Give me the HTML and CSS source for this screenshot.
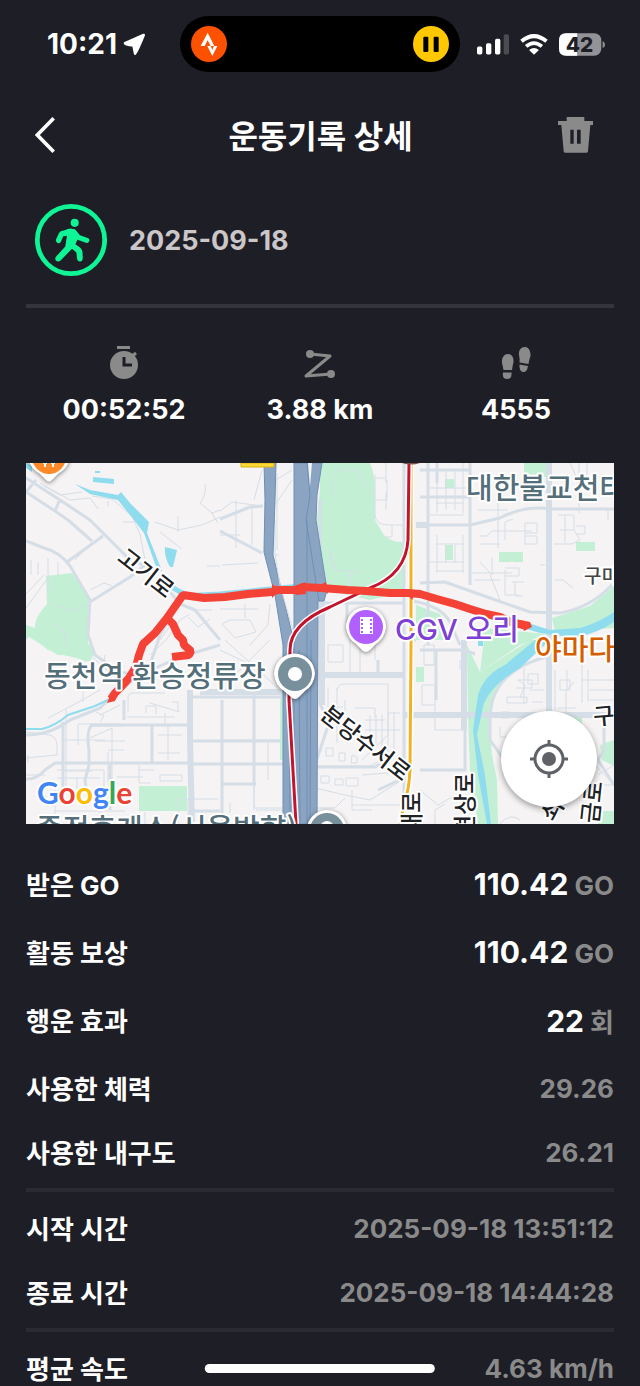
FILE: index.html
```html
<!DOCTYPE html>
<html lang="ko">
<head>
  <meta charset="UTF-8" />
  <meta name="viewport" content="width=device-width, initial-scale=1.0" />
  <title>운동기록 상세</title>
  <link rel="stylesheet" href="styles.css">
</head>
<body>
  <div class="screen">
    <div class="status-bar">
      <div class="status-left">
        <span class="clock">10:21</span>
        <svg class="arrow" viewBox="368 97 70 70"><path d="M431 103L374 128Q374 132 400 135L405 160Q408 160 431 103Z" fill="#fff" stroke="#fff" stroke-width="8" stroke-linejoin="round"/></svg>
      </div>
      <div class="island">
        <svg class="island-icon" viewBox="573 78 108 108">
          <circle cx="627" cy="132" r="54" fill="#fc5200"/>
          <path d="M602 138L623 98L643 138H632L623 121L614 138Z" fill="#fff"/>
          <path d="M622 138H632L637 149L642 138H652L637 168Z" fill="#fff"/>
        </svg>
        <svg class="island-icon" viewBox="0 0 108 108">
          <circle cx="54" cy="54" r="54" fill="#ffc800"/>
          <rect x="31" y="32" width="15" height="46" rx="3" fill="#000"/>
          <rect x="62" y="32" width="15" height="46" rx="3" fill="#000"/>
        </svg>
      </div>
      <div class="status-right">
        <svg class="signal" viewBox="472 98 96 62">
          <rect x="472" y="135" width="16" height="24" rx="5" fill="#fff"/>
          <rect x="499" y="125" width="16" height="34" rx="5" fill="#fff"/>
          <rect x="526" y="112" width="16" height="47" rx="5" fill="#fff"/>
          <rect x="552" y="98" width="16" height="61" rx="5" fill="#4b4b50"/>
        </svg>
        <svg class="wifi" viewBox="600 96 84 64">
          <path d="M604 118Q642 87 680 118" fill="none" stroke="#fff" stroke-width="12"/>
          <path d="M618 134Q642 113 666 134" fill="none" stroke="#fff" stroke-width="11"/>
          <path d="M627 145Q642 133 657 145L642 159Z" fill="#fff"/>
        </svg>
        <svg class="battery" viewBox="717 96 137 67">
          <rect x="717" y="96" width="126" height="67" rx="21" fill="#929297"/>
          <path d="M771 96H738Q717 96 717 117V142Q717 163 738 163H771Z" fill="#fff"/>
          <path d="M847 119Q854 123 854 130T847 140Z" fill="#929297"/>
          <text x="778" y="151" class="battery-text">42</text>
        </svg>
      </div>
    </div>

    <header class="header">
      <button class="icon-btn" aria-label="뒤로">
        <svg class="back" viewBox="0 0 60 108"><path d="M56 4L7 54L56 104" fill="none" stroke="#fff" stroke-width="11"/></svg>
      </button>
      <h1>운동기록 상세</h1>
      <button class="icon-btn delete-btn" aria-label="삭제">
        <svg class="trash" viewBox="0 0 105 108"><path fill="#8a8a8a" fill-rule="evenodd" d="M26 0H79V12H105V24H97L90 103Q90 107 86 107H21Q17 107 17 103L10 24H0V12H26ZM37 38V80H47V38ZM57 38V80H68V38Z"/></svg>
      </button>
    </header>

    <main class="content">
      <section class="summary">
        <svg class="walk" viewBox="0 0 214 214">
          <circle cx="107" cy="107" r="100" fill="none" stroke="#0ff596" stroke-width="14"/>
          <circle cx="118" cy="56" r="12" fill="#0ff596"/>
          <path d="M88 78Q108 68 119 78L131 96L120 120Q140 132 141 142L142 160Q142 171 134 171T125 162L123 144L110 133L76 168Q68 174 62 168Q58 162 63 156L90 126L95 94L84 96L77 112Q73 118 67 116Q61 113 62 106L71 87Q74 80 88 78Z" fill="#0ff596"/>
          <path d="M115 82L129 99L154 108" fill="none" stroke="#0ff596" stroke-width="15" stroke-linecap="round" stroke-linejoin="round"/>
        </svg>
        <time datetime="2025-09-18">2025-09-18</time>
      </section>

      <ul class="stats">
        <li>
          <svg class="stat-icon" viewBox="106 345 36 36">
            <circle cx="124" cy="365" r="14" fill="#8a8a8a"/>
            <path d="M117 346h13v3h-13z" fill="#8a8a8a"/>
            <path d="M131 357l5-4" stroke="#8a8a8a" stroke-width="3"/>
            <path d="M124 357v8h8" fill="none" stroke="#1e1e26" stroke-width="3"/>
          </svg>
          <strong>00:52:52</strong>
        </li>
        <li>
          <svg class="stat-icon" viewBox="302 345 36 36">
            <path d="M310 354L330 356L306 376L331 374" fill="none" stroke="#8a8a8a" stroke-width="3" stroke-linejoin="round"/>
            <circle cx="310" cy="354" r="4" fill="#8a8a8a"/>
            <circle cx="331" cy="374" r="4" fill="#8a8a8a"/>
          </svg>
          <strong>3.88 km</strong>
        </li>
        <li>
          <svg class="stat-icon" viewBox="498 345 36 36" fill="#8a8a8a">
            <path d="M508 354C512 354 514 358 513.5 362Q512.5 366 512 370H503.5Q503 367 502 363C501.5 358 504 354 508 354Z"/>
            <path d="M503 372.5h8.5Q512 379 507 379T503 372.5Z"/>
            <path d="M525 347C529 347 531 352 530.5 356Q529 360 528.5 364L519.5 362.5Q520 359 519 355C518.5 350 521 347 525 347Z"/>
            <path d="M519.5 364.5l8.5 1.5Q527 372.5 523 372Q519 371 519.5 364.5Z"/>
          </svg>
          <strong>4555</strong>
        </li>
      </ul>

      <div class="map">
        <svg class="map-canvas" viewBox="26 463 588 361" role="img" aria-label="운동 경로 지도">
          <rect x="26" y="463" width="588" height="361" fill="#f5f3f3"/>

          <!-- parks -->
          <g fill="#c3f0d5">
            <path d="M46 576L72 573L91 600L88 645L92 662L64 655L48 650L26 632V640L35 628Q34 618 47 604Z"/>
            <path d="M26 625L70 640L92 645L94 655L86 662Q76 654 58 655L26 635Z"/>
            <path d="M320 463H370Q375 474 375 490V520L384 535Q392 543 404 542V592L370 600L326 590L316 525L320 490Z"/>
            <path d="M524 463h22v14h-14l-8-4zM445 479h9v9h-9zM445 545h8v15h-8zM499 552h24v10h-24zM576 542h19v9h-19z"/>
            <path d="M614 586L590 606L552 618L555 632L614 628Z"/>
            <path d="M470 626L505 630L545 634L520 645L480 672L484 640Z"/>
            <path d="M467 645L480 672L530 640L550 640L520 665Q494 684 492 712H468Z"/>
            <path d="M468 718H489L492 755L497 780L498 824H478L470 770Z"/>
            <path d="M416 605L440 614L452 640H416ZM416 667h8v15h-8z"/>
            <path d="M139 786h48v25h-48zM280 695h4v65h-4zM600 745L614 740V766L602 760ZM598 811h16v13h-16zM570 718h12v8h-12z"/>
          </g>

          <!-- streets -->
          <g class="street">
            <path d="M40 483L70 500L90 498L98 509M44 486L60 495L82 492M92 496L112 499L132 516L140 534L145 560M108 501v5M123 522h12M155 522L178 530L202 525L220 517M178 516v16M205 484Q207 494 200 503L212 513L220 510M212 513l6 10M220 566h-13M160 532L170 540L182 549"/>
            <path d="M31 560v15M38 562v13M48 558V598M58 562v14M26 594L44 575M26 608L50 575M90 590L104 583L112 586M52 602Q66 612 78 610L88 604M53 624L64 632L66 646"/>
            <path d="M195 610h17M150 655L166 640L180 620L190 614M160 640l10-14M188 617l10 10 12-8M75 560L84 550"/>
            <path d="M220 511L232 502L262 506M236 500v48M252 505v40M220 535h20M222 565L258 563M262 470L254 500M276 480L292 470M275 505L292 480M275 520v35h4"/>
            <path d="M220 609h38M245 604v14M222 624L230 620H250L256 632L235 638ZM270 604L268 625L250 645M220 650L262 670M230 680L270 640M225 640L280 690"/>
            <path d="M331 495Q330 472 342 470H355L365 483L372 494M328 548L336 570L360 572M333 570L330 552M375 475V515Q376 525 388 525H404M386 463v20M375 500h12V480M386 510v-18M392 525v12h-6M375 478h10"/>
            <path d="M430 488h36M437 463v50M463 463v50M446 470v40M455 470v40M436 503h28M430 515h34M437 535v38M463 535v38M446 545v18M455 545v18M436 544h28M430 562h34M436 571h28"/>
            <path d="M478 510h30M498 478v70M480 536h7l5-5h40M505 540v-18l8-3M525 545v-22h12v10h-12M525 536h12v8h-12M480 544h20M480 562L492 575V558M472 573h40M474 580h26M505 570v25h14M505 568h14v8h-14M490 575L500 600M512 582h12M515 582v14h8"/>
            <path d="M558 515h15M565 515v28M560 530h14M574 515v15l6 10-8 4H554M576 526h9v8h-9M579 463v50M555 580h8l10 8M540 565h5M570 463L580 485L587 480M608 510v10M587 463v16h10"/>
            <path d="M26 732L50 735Q57 738 57 745V755L26 758M28 755v8M64 740H105M66 710V790M78 745V724H120M95 741h30M93 726H125M90 738L112 728M112 728V790M108 750h16M64 771h28M108 752v30M77 777v12M57 770H104V790M57 778H100"/>
            <path d="M128 712V698Q128 693 134 693H165M127 717h48M150 703L180 712M146 713V706h10v8M172 702h6v10M165 713v12M158 735h24M168 725V760M158 753h22M160 775h22v6h-22ZM139 765v18h12M117 777h26M139 770h15M96 712L104 716L100 722"/>
            <path d="M90 655L116 678M105 655L102 675M83 685V702M48 718L75 704L100 690M120 705L100 715M190 740v40M26 775h20M55 788V824M100 800V824M178 799h40M178 799v25M188 799v25M55 811H125M145 812v12"/>
            <path d="M220 740h60M268 740v40M254 695V810M222 784h32v24h30M256 810h28M230 803v10"/>
            <path d="M328 645h15v17h-15ZM350 640v38M360 640v38M375 640v20M337 688v55M337 690Q338 684 344 684H388V735L362 760M345 700v15M365 720h20M328 687v20h15M365 730h35M370 715v30M376 715v30M382 715v40M388 712v50M394 712v40M388 713h12M355 708h20v10"/>
            <path d="M326 748h7v8h-7ZM339 753h6v8h-6ZM352 755l5 2v6h-6ZM321 776h8v7h-8ZM335 779h8v6h-8ZM346 778h12v8h-12ZM315 788L345 795L370 800L410 775M315 766H370L390 755M352 790v20h20M315 808h20l10-10M352 805h55M362 775L400 772"/>
            <path d="M424 645h10v20h-10ZM422 685h13v20h-13ZM424 665h12M460 660v10M435 705V730H465M501 712h8v6h-8ZM507 697h20v6h-20ZM518 680L525 685L520 698M518 680h14v8h-16M528 674h10v10h-10ZM524 668v36M530 690h14M532 702h11M555 670v40M567 670v20l7-8M560 680h10v10h-10ZM566 690v22M582 663v40M588 670v32M582 680h32M590 690h24M590 700h24M558 708h18"/>
            <path d="M420 790L438 805L452 797M435 824V810L445 804M500 824Q510 812 520 820M500 727v10h8M595 765L614 785M598 775L614 765M600 785h14"/>
          </g>
          <g class="road">
            <path d="M26 478L60 500L90 520L110 540L130 560L150 567M26 492L55 511L68 520L92 541M26 492l10-12M55 511l5-12M60 500L75 510M26 541L44 548Q60 552 70 566L90 600L88 635L95 655L120 672L140 675M67 562L103 536M90 602L130 577L145 565"/>
            <path d="M170 592L180 604L195 610L220 640M150 665L160 635L175 610M220 519L250 507L263 506M220 531L262 553M26 735Q50 735 70 720L100 708L120 690L140 675L180 657L220 645"/>
            <path d="M63 722V790M90 725H190M92 725Q86 730 89 750V765L85 780L88 800M26 779Q36 780 45 770L55 763H190M152 725V763M124 720V700M110 763V810M222 700V824M190 741H280M190 764H283M190 811H220M222 784h34M192 697H283M254 695V784M295 695v20"/>
            <path d="M404 463V824M324 603H404M320 675H404M320 500V705M320 705L330 720L315 765M347 603v20M378 660v15M428 463V645M420 525H470L500 518Q525 505 550 509H614M470 463V585M420 470h50M420 497h50M420 583L445 582L490 598L530 612L560 613Q590 608 612 585M437 463v20"/>
            <path d="M420 650H464L475 654M436 650V700M420 770H465V750M404 716H614M465 645V765M490 716Q492 670 550 656M490 716V740L510 768M604 716V750L598 760L614 785"/>
            <path d="M412 601Q440 605 450 622L460 645M404 640h12M404 715h15M378 790L410 775M318 767H375L390 758"/>
          </g>
          <g class="road wide">
            <path d="M549 463V640M549 650V730M190 690V740L192 824M464 640V730M404 715H614M200 692H283M320 675H404M322 600V705M416 525h12"/>
          </g>

          <!-- water -->
          <g fill="#8fdcef">
            <path d="M60 478L90 490L118 495L121 492L130 503L149 522L147 533L162 571L158 572L144 533L134 520L118 500L90 494L75 484ZM93 477l21 2v5l-21-2zM95 471h5v2h-5zM165 547l12 3-4 17h-3q-6-10-5-20zM26 462l6 4v6l-6-4z"/>
            <path d="M173 585L184 591L182 596L172 590Z"/>
            <path d="M418 590L500 614L550 630L580 628Q600 622 614 612V622Q600 632 575 638L540 633L495 620L418 595Z"/>
            <path d="M535 640L550 640L520 668Q484 690 482 712L477 735L485 775L491 824H487L478 775L473 730L478 695Q484 675 505 665ZM478 640h5v6h-5z"/>
          </g>
          <path d="M26 729H42Q55 726 68 715L95 706L110 699" fill="none" stroke="#8fdcef" stroke-width="2"/>
          <path d="M182 596L220 594L270 589L300 586" fill="none" stroke="#8fdcef" stroke-width="5"/>

          <!-- highways -->
          <g fill="#8ba4c1" stroke="#6d90b7">
            <path d="M264 463L265 500L264 552L275 595L283 645L283 824H300L296 650L285 605L273 555L275 500L276 463Z"/>
            <path d="M294 463H322L317 495L316 520L327 590L324 601H318L317 824H294Z"/>
            <path d="M307 463L310 495L306 520L319 601M307 520V824M299 650L300 824M311 640L310 824M289 660L290 824" fill="none"/>
            <path d="M308 463h4l-2 24z" fill="#f5f3f3" stroke="none"/>
          </g>
          <path d="M275 554L280 585L293 630M277 474V550" class="street"/>

          <!-- railways -->
          <path d="M411 463V645L410 770Q409 790 405 800L400 824" class="rail-casing"/>
          <path d="M411 463V645L410 770Q409 790 405 800L400 824" class="rail-yellow"/>
          <path d="M409 463L408 540Q406 574 370 588L330 607Q290 624 290 650L289 700L296 824" class="rail-casing"/>
          <path d="M409 463L408 540Q406 574 370 588L330 607Q290 624 290 650L289 700L296 824" class="rail-red"/>

          <path d="M350 586v-14M347 575h9" class="street"/>
          <path d="M241 463h33v4h-33z" fill="#fdd835" stroke="#d9b310"/>
          <path d="M402 463q9 3 18 0z" fill="#77534b"/>

          <!-- recorded route -->
          <path class="route" d="M111 699L115 693L121 687L129 678L136 667L139 655L143 644L155 633L167 618L183 595L204 598L225 597L248 594L272 592L277 590L295 590L303 587L321 588L348 590L366 591L390 593L408 593L420 594L437 599L455 604L470 609L486 614L500 617L511 622L527 626"/>
          <path class="route" d="M167 618L173 624L178 635L183 640L184 645L191 651L189 655L172 657"/>
          <path d="M107 703L112 691L119 690L115 701ZM272 584l8 6-8 8zM294 588l11-6 1 12-10 1zM318 586l8-4 2 12zM404 590l12 2-4 8zM520 620l10 2 2 5-8 4z" fill="#f44336"/>

          <!-- pins -->
          <g class="pin">
            <path d="M29 460A20 20 0 1 1 69 460Q68 468 58 474L52 480Q49 483 46 480L40 474Q30 468 29 460Z" fill="#fff"/>
            <circle cx="49" cy="457" r="17" fill="#ff8a27"/>
            <path d="M45 460v7M53 460v7M43 463h4M51 463h4" stroke="#fff" stroke-width="2"/>
          </g>
          <g class="pin">
            <path d="M346 627A20 20 0 1 1 386 627Q385 638 376 644L370 650Q366 654 362 650L356 644Q347 638 346 627Z" fill="#fff"/>
            <circle cx="366" cy="627" r="17" fill="#b15fff"/>
            <path fill="#fff" fill-rule="evenodd" d="M360 617h13v17h-13zM361 619v2h2v-2zM361 623v2h2v-2zM361 627v2h2v-2zM361 631v2h2v-2zM370 619v2h2v-2zM370 623v2h2v-2zM370 627v2h2v-2zM370 631v2h2v-2z"/>
          </g>
          <g class="pin">
            <path d="M274 674A20 20 0 1 1 315 674Q314 685 305 691L299 697Q295 701 291 697L284 691Q275 685 274 674Z" fill="#fff"/>
            <circle cx="295" cy="674" r="17" fill="#78909c"/>
            <circle cx="295" cy="674" r="7" fill="#fff"/>
          </g>
          <g class="pin">
            <circle cx="327" cy="830" r="20" fill="#fff"/>
            <circle cx="327" cy="830" r="17" fill="#78909c"/>
            <circle cx="327" cy="828" r="7" fill="#fff"/>
          </g>

          <!-- labels -->
          <g class="place">
            <text x="466" y="499">대한불교천태</text>
            <text x="44" y="687">동천역 환승정류장</text>
            <text x="36" y="840">죽전휴게소(서울방향)</text>
            <text x="395" y="640" class="cinema">CGV 오리</text>
            <text x="535" y="660" class="food">야마다</text>
            <text x="584" y="583" class="town">구미</text>
          </g>
          <g class="street-name">
            <text transform="translate(116 560) rotate(38)">고기로</text>
            <text transform="translate(319 717) rotate(38)">분당수서로</text>
            <text transform="translate(420 834) rotate(-90)">대로</text>
            <text transform="translate(473 836) rotate(-90)">현상로</text>
            <text transform="translate(594 725) rotate(-5)">구</text>
            <text transform="translate(554 823) rotate(-60)">쇠</text>
            <text transform="translate(598 824) rotate(-84)">금로</text>
          </g>
          <text x="37" y="804" class="google"><tspan fill="#4285f4">G</tspan><tspan fill="#ea4335">o</tspan><tspan fill="#fbbc04">o</tspan><tspan fill="#4285f4">g</tspan><tspan fill="#34a853">l</tspan><tspan fill="#ea4335">e</tspan></text>
        </svg>
        <button class="locate" aria-label="내 위치">
          <svg class="locate-icon" viewBox="0 0 114 114">
            <circle cx="57" cy="57" r="42" fill="none" stroke="#5f6368" stroke-width="9"/>
            <circle cx="57" cy="57" r="21" fill="#5f6368"/>
            <path d="M57 0v18M57 96v18M0 57h18M96 57h18" stroke="#5f6368" stroke-width="9"/>
          </svg>
        </button>
      </div>

      <dl class="details rewards">
        <div class="row"><dt>받은 GO</dt><dd><b>110.42</b> GO</dd></div>
        <div class="row"><dt>활동 보상</dt><dd><b>110.42</b> GO</dd></div>
        <div class="row"><dt>행운 효과</dt><dd><b>22</b> 회</dd></div>
      </dl>
      <dl class="details">
        <div class="row"><dt>사용한 체력</dt><dd>29.26</dd></div>
        <div class="row"><dt>사용한 내구도</dt><dd>26.21</dd></div>
      </dl>
      <dl class="details divided">
        <div class="row"><dt>시작 시간</dt><dd>2025-09-18 13:51:12</dd></div>
        <div class="row"><dt>종료 시간</dt><dd>2025-09-18 14:44:28</dd></div>
      </dl>
      <dl class="details divided">
        <div class="row"><dt>평균 속도</dt><dd>4.63 km/h</dd></div>
      </dl>
    </main>
    <div class="home-indicator"></div>
  </div>
</body>
</html>
```
FILE: styles.css
```css
* {
  box-sizing: border-box;
}

body {
  margin: 0;
  background: #1e1e26;
  color: #fff;
  font-family: Inter, "Noto Sans CJK KR", sans-serif;
}

svg {
  display: block;
}

button {
  padding: 0;
  border: none;
  background: none;
  cursor: pointer;
}

.screen {
  height: 100vh;
  overflow: hidden;
}

/* status bar */
.status-bar {
  display: grid;
  grid-template-columns: 1fr 280px 1fr;
  align-items: center;
  padding-top: 16px;
}

.status-left,
.status-right {
  display: flex;
  align-items: center;
}

.status-left {
  justify-content: flex-end;
  gap: 6px;
  padding-right: 34px;
}

.status-right {
  gap: 11px;
  padding-left: 17px;
}

.clock {
  font-size: 28px;
  font-weight: 700;
}

.arrow {
  width: 23px;
  height: 23px;
}

.island {
  display: flex;
  justify-content: space-between;
  align-items: center;
  height: 56px;
  padding: 0 11px;
  border-radius: 28px;
  background: #000;
}

.island-icon {
  width: 36px;
  height: 36px;
}

.signal {
  width: 32px;
  height: 21px;
}

.wifi {
  width: 28px;
  height: 21px;
}

.battery {
  width: 46px;
  height: 23px;
}

.battery-text {
  font-size: 62px;
  font-weight: 800;
  text-anchor: middle;
  fill: #1e1e26;
}

/* header */
.header {
  display: flex;
  justify-content: space-between;
  align-items: center;
  height: 126px;
  padding: 0 20px 0 35px;
}

.header h1 {
  margin: 0;
  padding-bottom: 2px;
  font-size: 32px;
  font-weight: 700;
}

.icon-btn {
  display: flex;
  align-items: center;
  width: 76px;
  height: 48px;
}

.delete-btn {
  justify-content: center;
  width: 90px;
}

.back {
  width: 20px;
  height: 36px;
}

.trash {
  width: 35px;
  height: 36px;
}

/* summary */
.content {
  padding: 0 26px;
}

.summary {
  display: flex;
  align-items: center;
  gap: 22px;
  padding: 6px 9px 28px;
  border-bottom: 4px solid #34343d;
}

.walk {
  width: 72px;
  height: 72px;
}

.summary time {
  color: #cbc6c8;
  font-size: 27px;
  font-weight: 700;
}

.stats {
  display: grid;
  grid-template-columns: repeat(3, 1fr);
  margin: 0;
  padding: 37px 0 35px;
  list-style: none;
}

.stats li {
  display: flex;
  flex-direction: column;
  align-items: center;
  gap: 11px;
}

.stat-icon {
  width: 36px;
  height: 36px;
}

.stats strong {
  font-size: 27px;
  line-height: 36px;
  font-weight: 700;
}

/* map */
.map {
  position: relative;
}

.map-canvas {
  width: 100%;
  height: auto;
}

.street,
.road {
  fill: none;
  stroke: #d5dee6;
  stroke-linejoin: round;
}

.street {
  stroke-width: 1;
}

.road {
  stroke-width: 3;
}

.wide {
  stroke-width: 6;
}

.rail-casing,
.rail-red,
.rail-yellow {
  fill: none;
}

.rail-casing {
  stroke: #fff;
  stroke-width: 6;
}

.rail-red {
  stroke: #c3142d;
  stroke-width: 3;
}

.rail-yellow {
  stroke: #f1b226;
  stroke-width: 3;
}

.route {
  fill: none;
  stroke: #f44336;
  stroke-width: 8;
  stroke-linejoin: bevel;
}

.pin {
  filter: drop-shadow(0 1px 2px rgba(0, 0, 0, 0.5));
}

.map-canvas text {
  font-family: "Noto Sans CJK KR", sans-serif;
  paint-order: stroke;
  stroke: #fff;
  stroke-width: 4px;
  stroke-linejoin: round;
}

.place {
  fill: #546e7a;
  font-size: 29px;
  font-weight: 500;
}

.map-canvas .cinema {
  font-family: Inter, "Noto Sans CJK KR", sans-serif;
  fill: #7e3fd4;
}

.place .food {
  fill: #d55f00;
}

.place .town {
  fill: #444;
  font-size: 19px;
}

.street-name {
  fill: #202124;
  font-size: 23px;
  font-weight: 500;
}

.map-canvas .google {
  font-family: Lato, sans-serif;
  font-size: 30px;
  font-weight: 700;
}

.locate {
  position: absolute;
  right: 17px;
  bottom: 17px;
  display: flex;
  justify-content: center;
  align-items: center;
  width: 96px;
  height: 96px;
  border-radius: 50%;
  background: #fff;
  box-shadow: 0 2px 6px rgba(0, 0, 0, 0.4);
}

.locate-icon {
  width: 38px;
  height: 38px;
}

/* details */
.details {
  margin: 0;
}

.row {
  display: flex;
  justify-content: space-between;
  align-items: center;
  height: 64px;
}

.rewards {
  margin: 26px 0 2px;
}

.rewards .row {
  height: 68px;
}

.divided {
  margin-top: 4px;
  padding-top: 4px;
  border-top: 4px solid #2a2a33;
}

.row dt {
  padding-bottom: 2px;
  font-family: Inter, "Noto Sans CJK KR", sans-serif;
  font-size: 26px;
  font-weight: 700;
}

.row dd {
  margin: 0;
  color: #8a8a8a;
  font-size: 26px;
  font-weight: 700;
}

.row b {
  color: #fff;
  font-size: 30px;
  font-weight: 700;
}

.home-indicator {
  position: fixed;
  left: 50%;
  bottom: 13px;
  width: 36%;
  height: 9px;
  border-radius: 5px;
  background: #fff;
  transform: translateX(-50%);
}
```
